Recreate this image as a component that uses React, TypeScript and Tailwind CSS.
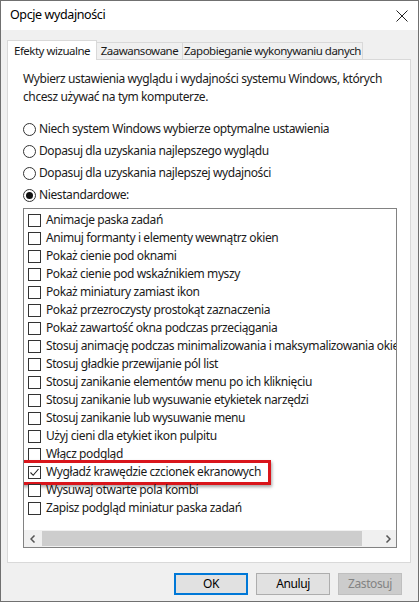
import React from "react";

const items = [
  "Animacje paska zadań",
  "Animuj formanty i elementy wewnątrz okien",
  "Pokaż cienie pod oknami",
  "Pokaż cienie pod wskaźnikiem myszy",
  "Pokaż miniatury zamiast ikon",
  "Pokaż przezroczysty prostokąt zaznaczenia",
  "Pokaż zawartość okna podczas przeciągania",
  "Stosuj animację podczas minimalizowania i maksymalizowania okien",
  "Stosuj gładkie przewijanie pól list",
  "Stosuj zanikanie elementów menu po ich kliknięciu",
  "Stosuj zanikanie lub wysuwanie etykietek narzędzi",
  "Stosuj zanikanie lub wysuwanie menu",
  "Użyj cieni dla etykiet ikon pulpitu",
  "Włącz podgląd",
  "Wygładź krawędzie czcionek ekranowych",
  "Wysuwaj otwarte pola kombi",
  "Zapisz podgląd miniatur paska zadań",
];

function Radio({ checked, label }: { checked?: boolean; label: string }) {
  return (
    <div className="flex items-center h-[22px]">
      <div className="w-[13px] h-[13px] rounded-full border border-[#333] bg-white flex items-center justify-center mr-[3px]">
        {checked && <div className="w-[7px] h-[7px] rounded-full bg-[#111]" />}
      </div>
      <span>{label}</span>
    </div>
  );
}

export default function App() {
  return (
    <div
      className="w-[419px] h-[602px] bg-[#f0f0f0] border border-[#707070] flex flex-col text-[12px] tracking-[-0.4px] text-[#1a1a1a] overflow-hidden"
      style={{ fontFamily: '"Segoe UI", "Noto Sans", sans-serif' }}
    >
      {/* title bar */}
      <div className="h-[29px] bg-white flex items-center justify-between pl-[9px] pr-[9px] shrink-0">
        <span className="text-[12.5px] text-black">Opcje wydajności</span>
        <svg width="12" height="12" viewBox="0 0 12 12" className="mr-[1px]">
          <path d="M0.5 0.5 L11.5 11.5 M11.5 0.5 L0.5 11.5" stroke="#222" strokeWidth="1" />
        </svg>
      </div>

      {/* tabs */}
      <div className="flex items-end h-[29px] pl-[6px] pt-[9px] shrink-0 whitespace-nowrap text-[11.5px] tracking-[-0.5px]">
        <div className="h-[20px] w-[90px] bg-white border border-[#d9d9d9] border-b-0 flex items-center justify-center relative z-10 -mb-[1px]">
          Efekty wizualne
        </div>
        <div className="h-[17px] w-[86px] bg-[#f0f0f0] border border-[#d9d9d9] border-b-0 border-l-0 flex items-center justify-center">
          Zaawansowane
        </div>
        <div className="h-[17px] w-[180px] bg-[#f0f0f0] border border-[#d9d9d9] border-b-0 border-l-0 flex items-center justify-center">
          Zapobieganie wykonywaniu danych
        </div>
      </div>

      {/* panel */}
      <div className="mx-[6px] w-[404px] h-[504px] bg-white border border-[#d9d9d9] px-[15px] pt-[10px] shrink-0">
        <p className="leading-[18px] w-[372px]">
          Wybierz ustawienia wyglądu i wydajności systemu Windows, których chcesz używać na tym komputerze.
        </p>
        <div className="mt-[12px] flex flex-col">
          <Radio label="Niech system Windows wybierze optymalne ustawienia" />
          <Radio label="Dopasuj dla uzyskania najlepszego wyglądu" />
          <Radio label="Dopasuj dla uzyskania najlepszej wydajności" />
          <Radio checked label="Niestandardowe:" />
        </div>

        {/* list box */}
        <div className="mt-[2px] w-[374px] h-[340px] border border-[#828282] flex flex-col">
          <div className="flex-1 pt-[2px] pl-[4px] overflow-hidden">
            {items.map((t, i) => (
              <div key={i} className="relative flex items-center h-[18px] whitespace-nowrap">
                {i === 14 && (
                  <div className="absolute left-[-8px] top-[-3px] w-[251px] h-[25px] border-[3px] border-[#d9151b] shadow-[1px_2px_3px_rgba(0,0,0,0.35)]" />
                )}
                <div className="w-[13px] h-[13px] border border-[#333] bg-white mr-[5px] shrink-0 flex items-center justify-center">
                  {i === 14 && (
                    <svg width="11" height="11" viewBox="0 0 11 11">
                      <path d="M1.5 5.5 L4.2 8.3 L9.5 2" stroke="#222" strokeWidth="1.1" fill="none" />
                    </svg>
                  )}
                </div>
                <span>{t}</span>
              </div>
            ))}
          </div>
          {/* horizontal scrollbar */}
          <div className="h-[17px] bg-[#f0f0f0] flex items-center shrink-0">
            <div className="w-[17px] h-[17px] flex items-center justify-center">
              <svg width="6" height="8" viewBox="0 0 6 8">
                <path d="M4.5 0.5 L1 4 L4.5 7.5" stroke="#555" strokeWidth="1.5" fill="none" />
              </svg>
            </div>
            <div className="w-[320px] h-[15px] bg-[#cdcdcd] ml-[1px]" />
            <div className="flex-1" />
            <div className="w-[17px] h-[17px] flex items-center justify-center">
              <svg width="6" height="8" viewBox="0 0 6 8">
                <path d="M1.5 0.5 L5 4 L1.5 7.5" stroke="#555" strokeWidth="1.5" fill="none" />
              </svg>
            </div>
          </div>
        </div>
      </div>

      {/* buttons */}
      <div className="flex justify-end gap-[8px] pr-[16px] mt-[10px]">
        <div className="w-[74px] h-[22px] bg-[#e1e1e1] border-2 border-[#0078d7] flex items-center justify-center text-black">OK</div>
        <div className="w-[74px] h-[22px] bg-[#e1e1e1] border border-[#adadad] flex items-center justify-center text-black">Anuluj</div>
        <div className="w-[64px] h-[22px] bg-[#cccccc] border border-[#bfbfbf] flex items-center justify-center text-[#838383]">Zastosuj</div>
      </div>
    </div>
  );
}
